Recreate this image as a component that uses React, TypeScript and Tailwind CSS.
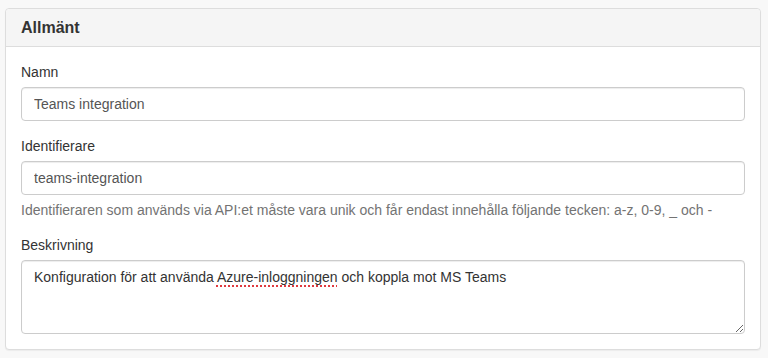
import { useState } from "react";

const FONT = { fontFamily: '"Liberation Sans", Arial, sans-serif' };

export default function App() {
  const [name, setName] = useState("Teams integration");
  const [ident, setIdent] = useState("teams-integration");
  const [desc, setDesc] = useState(
    "Konfiguration för att använda Azure-inloggningen och koppla mot MS Teams"
  );

  return (
    <div className="min-h-screen bg-[#f8f8f8] pt-2 pl-[5px] pr-[7px] text-[14px] leading-5 text-[#333]" style={FONT}>
      <div className="rounded border border-[#ddd] bg-white shadow-[0_1px_1px_rgba(0,0,0,0.05)]">
        {/* header */}
        <div className="rounded-t border-b border-[#ddd] bg-[#f5f5f5] px-[15px] py-[10px]">
          <h3 className="text-[16px] font-bold leading-[17px] text-[#333]">Allmänt</h3>
        </div>

        {/* body */}
        <div className="px-[15px] pt-[15px]">
          <div className="mb-[15px]">
            <label className="mb-[5px] block">Namn</label>
            <input
              value={name}
              onChange={(e) => setName(e.target.value)}
              className="block h-[34px] w-full rounded border border-[#ccc] bg-white px-3 text-[14px] text-[#555] shadow-[inset_0_1px_1px_rgba(0,0,0,0.075)] outline-none"
              style={FONT}
            />
          </div>

          <div className="mb-[15px]">
            <label className="mb-[5px] block">Identifierare</label>
            <input
              value={ident}
              onChange={(e) => setIdent(e.target.value)}
              className="block h-[34px] w-full rounded border border-[#ccc] bg-white px-3 text-[14px] text-[#555] shadow-[inset_0_1px_1px_rgba(0,0,0,0.075)] outline-none"
              style={FONT}
            />
            <p className="mt-[5px] text-[#737373]">
              Identifieraren som används via API:et måste vara unik och får endast innehålla följande tecken: a-z, 0-9, _ och -
            </p>
          </div>

          <div className="pb-[15px]">
            <label className="mb-[5px] block">Beskrivning</label>
            <div className="relative">
              <textarea
                rows={3}
                value={desc}
                spellCheck={false}
                onChange={(e) => setDesc(e.target.value)}
                className="block h-[74px] w-full resize-y rounded border border-[#ccc] bg-white px-3 py-[6px] text-[14px] leading-5 text-[#333] shadow-[inset_0_1px_1px_rgba(0,0,0,0.075)] outline-none"
                style={FONT}
              />
              {/* spell-check marker */}
              <div
                aria-hidden="true"
                className="pointer-events-none absolute inset-0 border border-transparent px-3 py-[6px] text-[14px] leading-5 text-transparent"
                style={FONT}
              >
                Konfiguration för att använda{" "}
                <span className="underline decoration-[#e0393e] decoration-dotted decoration-[1.5px] underline-offset-[3px]">
                  Azure-inloggningen
                </span>{" "}
                och koppla mot MS Teams
              </div>
            </div>
          </div>
        </div>
      </div>
    </div>
  );
}
